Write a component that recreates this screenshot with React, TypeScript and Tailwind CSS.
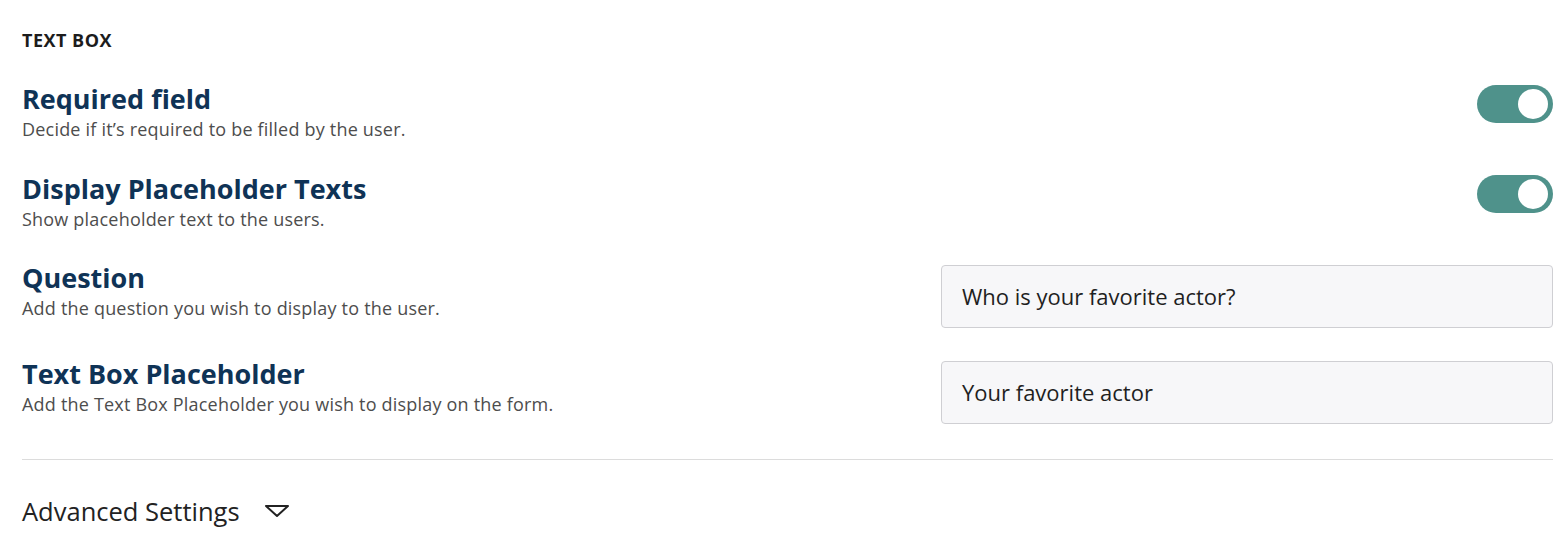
import React from "react";

function Toggle() {
  return (
    <div className="flex h-[38px] w-[76px] items-center justify-end rounded-full bg-[#4f928b] pr-[5px]">
      <div className="h-[30px] w-[30px] rounded-full bg-white" />
    </div>
  );
}

function Label({ title, desc }: { title: string; desc: string }) {
  return (
    <div className="flex flex-col">
      <div className="text-[27px] font-bold leading-[36px] text-[#0f3356]">{title}</div>
      <div className="text-[18px] leading-[24px] tracking-[0.2px] text-[#4d4d4d]">{desc}</div>
    </div>
  );
}

function TextInput({ value }: { value: string }) {
  return (
    <div className="mt-[5px] flex h-[63px] w-[612px] items-center rounded-[4px] border border-[#cfcfd3] bg-[#f7f7f9] px-[20px] text-[22px] text-[#1f1f1f]">
      {value}
    </div>
  );
}

export default function App() {
  return (
    <div
      className="min-h-[553px] bg-white pl-[22px] pr-[12px] pt-[30px]"
      style={{ fontFamily: "'Open Sans', sans-serif" }}
    >
      <div className="text-[18px] font-bold leading-[20px] tracking-[0.5px] text-[#1c1c1c]">TEXT BOX</div>

      <div className="mt-[31px] flex items-start justify-between">
        <Label title="Required field" desc="Decide if it’s required to be filled by the user." />
        <div className="mt-[4px]">
          <Toggle />
        </div>
      </div>

      <div className="mt-[30px] flex items-start justify-between">
        <Label title="Display Placeholder Texts" desc="Show placeholder text to the users." />
        <div className="mt-[4px]">
          <Toggle />
        </div>
      </div>

      <div className="mt-[29px] flex items-start justify-between">
        <Label title="Question" desc="Add the question you wish to display to the user." />
        <TextInput value="Who is your favorite actor?" />
      </div>

      <div className="mt-[28px] flex items-start justify-between">
        <Label title="Text Box Placeholder" desc="Add the Text Box Placeholder you wish to display on the form." />
        <TextInput value="Your favorite actor" />
      </div>

      <div className="mt-[35px] border-t border-[#dcdcdc]" />

      <div className="mt-[36px] flex items-center gap-[24px]">
        <span className="text-[25.5px] leading-[30px] text-[#222]">Advanced Settings</span>
        <svg width="26" height="14" viewBox="0 0 26 14" fill="none">
          <path d="M2 2 L24 2 L13 12 Z" stroke="#222" strokeWidth="2" strokeLinejoin="round" />
        </svg>
      </div>
    </div>
  );
}
